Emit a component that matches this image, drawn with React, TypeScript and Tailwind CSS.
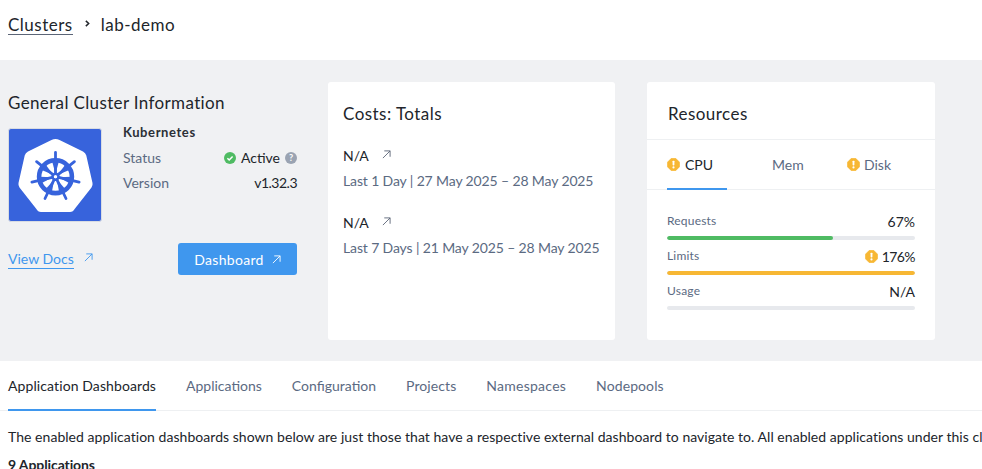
import React from "react";

const Ext = ({ className = "" }: { className?: string }) => (
  <svg viewBox="0 0 10 10" className={"w-[9px] h-[9px] " + className} fill="none" stroke="currentColor" strokeWidth="1">
    <path d="M1 9 L9 1 M2.5 1 H9 V7.5" />
  </svg>
);

const Warn = ({ className = "" }: { className?: string }) => (
  <svg viewBox="0 0 12 12" className={"w-[13px] h-[13px] shrink-0 " + className}>
    <path d="M4 .3 H8 L11.7 4 V8 L8 11.7 H4 L.3 8 V4 Z" fill="#f7b733" stroke="#f7b733" strokeWidth=".5" strokeLinejoin="round" />
    <rect x="5.15" y="2.5" width="1.7" height="4.4" rx=".6" fill="#fff" />
    <circle cx="6" cy="8.7" r="1" fill="#fff" />
  </svg>
);

const Wheel = () => {
  const angles = [0, 51.43, 102.86, 154.29, 205.71, 257.14, 308.57];
  return (
    <svg viewBox="1 1 92 92" className="w-full h-full">
      <path d="M47.5 11 Q49.5 11 51.5 12 L75 23.5 Q77.5 25 78.3 27.5 L84.5 55 Q85 57.5 83.5 59.5 L67 80.5 Q65 84 62 84 L33 84 Q30 84 28 80.5 L11.5 59.5 Q10 57.5 10.5 55 L16.7 27.5 Q17.5 25 20 23.5 L43.5 12 Q45.5 11 47.5 11 Z" fill="#fff" />
      <circle cx="47.5" cy="48.7" r="16.4" fill="none" stroke="#3763dc" strokeWidth="4.6" />
      <circle cx="47.5" cy="48.7" r="3" fill="none" stroke="#3763dc" strokeWidth="2.4" />
      {angles.map((a) => (
        <g key={a} transform={`rotate(${a} 47.5 48.7)`}>
          <path d="M47.5 45.5 V24.5" stroke="#3763dc" strokeWidth="2.8" strokeLinecap="round" />
          <path d="M47.5 45.7 L44 33 H51 Z" fill="#3763dc" />
        </g>
      ))}
    </svg>
  );
};

const Bar = ({ pct, color }: { pct: number; color: string }) => (
  <div className="h-1 rounded-full bg-[#e7e9ed] mt-[5px] overflow-hidden">
    <div className={"h-full rounded-full " + color} style={{ width: `${pct}%` }} />
  </div>
);

const CostItem = ({ label }: { label: string }) => (
  <div>
    <div className="flex items-center gap-[13px] text-[14px] leading-5 text-[#21252b]">
      <span>N/A</span>
      <Ext className="text-[#5b6577] -mt-1" />
    </div>
    <div className="mt-[5px] text-[14px] leading-5 text-[#5b6a82] whitespace-nowrap tracking-[-0.13px]">{label}</div>
  </div>
);

export default function App() {
  return (
    <div className="w-[982px] h-[469px] overflow-hidden bg-white text-[#21252b] font-['Lato','Open_Sans',sans-serif]">
      <header className="h-[60px] pl-2 flex items-center pb-[10px] text-[17px] tracking-[0.5px]">
        <span className="border-b border-[#5b6577] leading-[19px]">Clusters</span>
        <svg viewBox="0 0 6 8" className="w-[5px] h-[7px] ml-[12px] mr-[11px] -mt-[3px]" fill="none" stroke="#21252b" strokeWidth="1.8"><path d="M1 .8 L4.4 4 L1 7.2" /></svg>
        <span>lab-demo</span>
      </header>

      <section className="h-[301px] bg-[#f0f1f3] pl-2 pt-[22px] flex">
        <div className="w-[289px] mr-[31px] pt-[10px]">
          <h2 className="text-[17px] leading-[21px] tracking-[0.36px] whitespace-nowrap">General Cluster Information</h2>
          <div className="flex mt-[15px]">
            <div className="w-[94px] h-[94px] rounded-[3px] bg-[#3763dc] border border-[#d8dce3] overflow-hidden shrink-0"><Wheel /></div>
            <div className="ml-[21px] flex-1 text-[14px] -mt-[7px]">
              <div className="h-[24px] flex items-center font-bold text-[13px] tracking-[0.6px] text-[#2b2f36]">Kubernetes</div>
              <div className="h-[25px] flex items-center justify-between text-[#5b6a82]">
                <span>Status</span>
                <span className="flex items-center">
                  <svg viewBox="0 0 12 12" className="w-3 h-3 mr-[5px]"><circle cx="6" cy="6" r="6" fill="#4fbb63" /><path d="M3.4 6.2 L5.2 8 L8.6 4.4" fill="none" stroke="#fff" strokeWidth="1.5" /></svg>
                  <span className="text-[#21252b]">Active</span>
                  <span className="ml-[5px] w-3 h-3 rounded-full bg-[#9aa3b2] text-white text-[9px] font-bold leading-3 text-center">?</span>
                </span>
              </div>
              <div className="h-[25px] flex items-center justify-between text-[#5b6a82]">
                <span>Version</span>
                <span className="text-[#21252b] tracking-[-0.5px]">v1.32.3</span>
              </div>
            </div>
          </div>
          <div className="flex items-center justify-between mt-[21px]">
            <a className="flex items-center gap-[10px] text-[14px] text-[#3f97ee]">
              <span className="border-b border-[#3f97ee] leading-[18px]">View Docs</span>
              <Ext className="-mt-1" />
            </a>
            <button className="w-[119px] h-8 rounded-[3px] bg-[#3f97ee] text-white text-[14px] tracking-[0.3px] flex items-center justify-center gap-[8px]">
              Dashboard <Ext />
            </button>
          </div>
        </div>

        <div className="w-[287px] h-[258px] bg-white rounded-[3px] mr-[32px] pl-[15px] pt-[20px]">
          <h2 className="text-[17px] leading-[23px] tracking-[0.45px]">Costs: Totals</h2>
          <div className="mt-[21px] flex flex-col gap-[22px]">
            <CostItem label="Last 1 Day | 27 May 2025 – 28 May 2025" />
            <CostItem label="Last 7 Days | 21 May 2025 – 28 May 2025" />
          </div>
        </div>

        <div className="w-[288px] h-[258px] bg-white rounded-[3px]">
          <h2 className="h-[58px] border-b border-[#eef0f2] pl-[21px] pt-[20px] text-[17px] leading-[23px] tracking-[0.45px]">Resources</h2>
          <div className="h-[50px] border-b border-[#eef0f2] pl-[20px] flex text-[14px] text-[#5b6a82]">
            <div className="w-[60px] border-b-2 border-[#3f97ee] -mb-px flex items-center gap-[5px] text-[#21252b]"><Warn />CPU</div>
            <div className="w-[120px] pl-[45px] flex items-center">Mem</div>
            <div className="flex items-center gap-[4px]"><Warn />Disk</div>
          </div>
          <div className="px-[20px] pt-[21px]">
            <div>
              <div className="flex justify-between items-center h-[20px]"><span className="text-[12px] text-[#5b6a82] tracking-[0.2px]">Requests</span><span className="text-[14px]">67%</span></div>
              <Bar pct={67} color="bg-[#4fbb63]" />
            </div>
            <div className="mt-[6px]">
              <div className="flex justify-between items-center h-[20px]"><span className="text-[12px] text-[#5b6a82] tracking-[0.2px]">Limits</span><span className="flex items-center gap-[4px] text-[14px]"><Warn /><span className="tracking-[-0.6px]">176%</span></span></div>
              <Bar pct={100} color="bg-[#f7b733]" />
            </div>
            <div className="mt-[6px]">
              <div className="flex justify-between items-center h-[20px]"><span className="text-[12px] text-[#5b6a82] tracking-[0.2px]">Usage</span><span className="text-[14px]">N/A</span></div>
              <Bar pct={0} color="bg-[#4fbb63]" />
            </div>
          </div>
        </div>
      </section>

      <nav className="h-[50px] border-b border-[#eef0f2] pl-2 flex gap-[30px] text-[14px] text-[#5b6a82]">
        <a className="h-[50px] flex items-center border-b-2 border-[#3f97ee] text-[#21252b] tracking-[0.1px]">Application Dashboards</a>
        <a className="flex items-center">Applications</a>
        <a className="flex items-center">Configuration</a>
        <a className="flex items-center tracking-[0.1px]">Projects</a>
        <a className="flex items-center tracking-[0.25px]">Namespaces</a>
        <a className="flex items-center tracking-[0.1px]">Nodepools</a>
      </nav>

      <div className="pl-2 pt-[16px] text-[14px] leading-5 whitespace-nowrap tracking-[0.04px] text-[#21252b]">
        <p>The enabled application dashboards shown below are just those that have a respective external dashboard to navigate to. All enabled applications under this cluster are listed</p>
        <p className="mt-[8px] font-bold tracking-[-0.1px]">9 Applications</p>
      </div>
    </div>
  );
}
